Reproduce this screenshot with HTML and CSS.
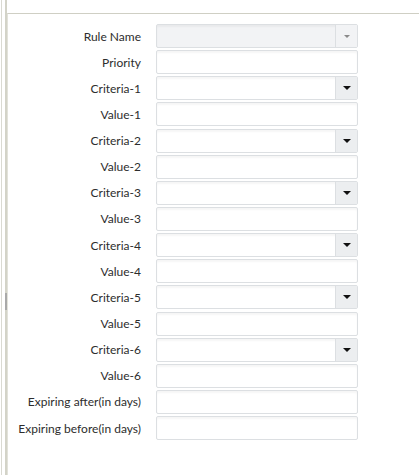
FILE: index.html
```html
<!DOCTYPE html>
<html lang="en">
<head>
    <meta charset="UTF-8">
    <title>Rule</title>
    <link rel="stylesheet" href="styles.css">
</head>
<body>
    <div class="page">
        <div class="rail"></div>
        <div class="splitter"><span class="handle"></span></div>
        <div class="panel">
            <div class="rule-form">
                <label>Rule Name</label>
                <div class="select disabled"><span class="value"></span><span class="btn"><i class="arrow"></i></span></div>

                <label>Priority</label>
                <input type="text" class="field">

                <label>Criteria-1</label>
                <div class="select"><span class="value"></span><span class="btn"><i class="arrow"></i></span></div>
                <label>Value-1</label>
                <input type="text" class="field">

                <label>Criteria-2</label>
                <div class="select"><span class="value"></span><span class="btn"><i class="arrow"></i></span></div>
                <label>Value-2</label>
                <input type="text" class="field">

                <label>Criteria-3</label>
                <div class="select"><span class="value"></span><span class="btn"><i class="arrow"></i></span></div>
                <label>Value-3</label>
                <input type="text" class="field">

                <label>Criteria-4</label>
                <div class="select"><span class="value"></span><span class="btn"><i class="arrow"></i></span></div>
                <label>Value-4</label>
                <input type="text" class="field">

                <label>Criteria-5</label>
                <div class="select"><span class="value"></span><span class="btn"><i class="arrow"></i></span></div>
                <label>Value-5</label>
                <input type="text" class="field">

                <label>Criteria-6</label>
                <div class="select"><span class="value"></span><span class="btn"><i class="arrow"></i></span></div>
                <label>Value-6</label>
                <input type="text" class="field">

                <label>Expiring after(in days)</label>
                <input type="text" class="field">

                <label>Expiring before(in days)</label>
                <input type="text" class="field">
            </div>
        </div>
    </div>
</body>
</html>
```

FILE: styles.css
```css
html, body {
    margin: 0;
    padding: 0;
    height: 100%;
    background-color: white;
}
body {
    font-family: Lato, "Open Sans", sans-serif;
    font-size: 12px;
    color: #2d2d2d;
}
.page {
    display: flex;
    height: 475px;
}
.rail {
    width: 1px;
    margin-left: 1px;
    background-color: #dadad2;
}
.splitter {
    width: 2px;
    margin-left: 3px;
    background-color: #d3d3c8;
    display: flex;
    flex-direction: column;
}
.handle {
    display: block;
    margin-top: 293px;
    height: 17px;
    background-color: #a9a9a9;
}
.panel {
    flex: 1;
    margin-top: 13px;
    border-top: 1px solid #cfcfc4;
    border-left: 1px solid #e2e2da;
    padding-top: 10px;
}
.rule-form {
    display: grid;
    grid-template-columns: 133px 202px;
    column-gap: 15px;
    row-gap: 2.15px;
    grid-auto-rows: 24px;
    align-items: center;
}
.rule-form label {
    text-align: right;
    white-space: nowrap;
}
.field,
.select {
    box-sizing: border-box;
    height: 24px;
    width: 202px;
    margin: 0;
    border: 1px solid #dcdfe2;
    border-radius: 2px;
    background-color: white;
    box-shadow: inset 0 2px 2px rgba(0, 0, 0, 0.04);
}
.select {
    display: flex;
}
.select .value {
    flex: 1;
}
.select .btn {
    width: 21px;
    border-left: 1px solid #dcdfe2;
    background-color: #eceef0;
    display: flex;
    align-items: center;
    justify-content: center;
}
.select .arrow {
    width: 0;
    height: 0;
    border-left: 4px solid transparent;
    border-right: 4px solid transparent;
    border-top: 4px solid #111;
}
.select.disabled {
    background-color: #f2f3f5;
}
.select.disabled .btn {
    background-color: #f2f3f5;
}
.select.disabled .arrow {
    border-top-color: #8a8a8a;
    border-left-width: 3px;
    border-right-width: 3px;
    border-top-width: 3px;
}
```
